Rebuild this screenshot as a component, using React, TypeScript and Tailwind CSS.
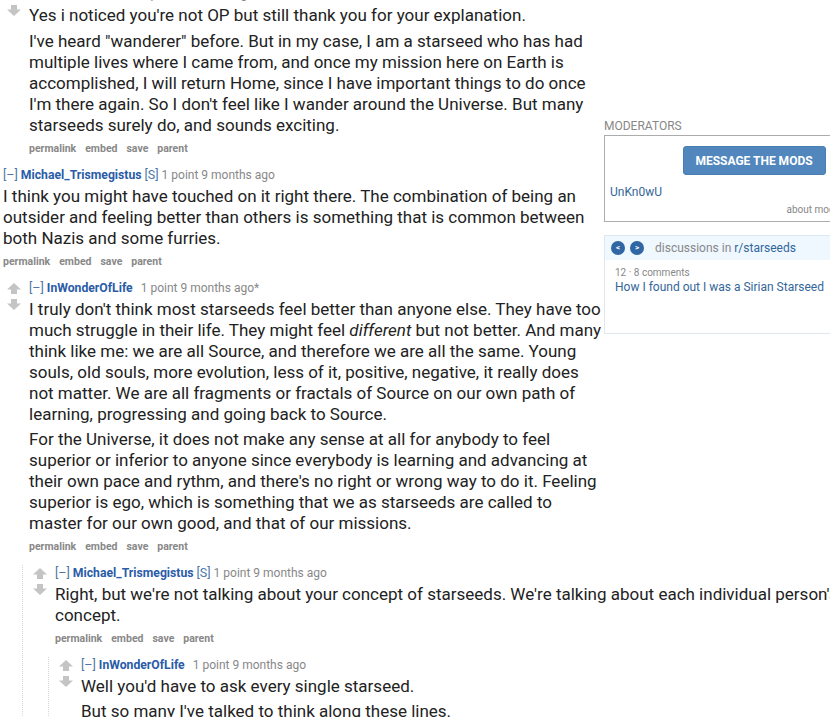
import React from 'react'

function Arrow({ down }: { down?: boolean }) {
  return (
    <svg viewBox="0 0 14 11" className={down ? 'w-[14px] h-[11px] rotate-180' : 'w-[14px] h-[11px]'}>
      <path d="M7 0 L14 6.5 H10 V11 H4 V6.5 H0 Z" fill="#c4c4c4" />
    </svg>
  )
}

interface TaglineProps {
  author: string
  submitter?: boolean
  edited?: boolean
}

function Tagline({ author, submitter, edited }: TaglineProps) {
  return (
    <div className="text-[12px] leading-[16px] text-[#888] whitespace-nowrap">
      <span className="text-[12.5px] text-[#4e76a8]">[–]</span>{' '}
      <span className="text-[12.2px] font-bold text-[#2a5ca8]">{author}</span>
      {submitter ? (
        <>
          {' '}
          <span className="text-[12.5px] text-[#4e76a8]">[S]</span>{' '}
        </>
      ) : (
        <span className="inline-block w-[8px]" />
      )}
      1 point 9 months ago{edited ? '*' : ''}
    </div>
  )
}

function Buttons() {
  return (
    <div className="mt-[5.5px] flex gap-[9px] text-[10.5px] leading-[14px] font-bold text-[#888]">
      <span>permalink</span>
      <span>embed</span>
      <span>save</span>
      <span>parent</span>
    </div>
  )
}

interface CommentProps extends TaglineProps {
  bodyClass: string
  paras: React.ReactNode[]
  children?: React.ReactNode
}

function Comment({ author, submitter, edited, bodyClass, paras, children }: CommentProps) {
  return (
    <div className="flex">
      {/* vote arrows */}
      <div className="w-[14px] shrink-0 pt-[3px] flex flex-col gap-[5px]">
        <Arrow />
        <Arrow down />
      </div>
      <div className="ml-[8px] flex-1 min-w-0">
        <Tagline author={author} submitter={submitter} edited={edited} />
        <div className={bodyClass}>
          {paras.map((p, i) => (
            <p key={i}>{p}</p>
          ))}
        </div>
        <Buttons />
        {children && (
          <div className="mt-[11px] -ml-[7px] border-l border-dotted border-[#d6d6de] pl-[10px]">{children}</div>
        )}
      </div>
    </div>
  )
}

function Sidebar() {
  return (
    <div className="float-right w-[300px] mt-[118px]">
      <div className="text-[12px] leading-[16px] text-[#888] uppercase">Moderators</div>
      <div className="mt-px border border-[#acacac] px-[5px] pt-[10px] pb-[4px]">
        <div className="flex justify-center">
          <button className="h-[29px] w-[143px] rounded-[3px] bg-[#5287bd] border border-[#4a7db2] text-white font-bold text-[12px]">
            MESSAGE THE MODS
          </button>
        </div>
        <div className="mt-[9px] text-[12px] leading-[16px] text-[#336699]">UnKn0wU</div>
        <div className="mt-[3px] text-right text-[10px] leading-[14px] text-[#888]">about moderation team »</div>
      </div>

      <div className="mt-[13px] border border-[#e1e7ee]">
        <div className="h-[24px] bg-[#eff7ff] flex items-center pl-[6px]">
          <span className="w-[14px] h-[14px] rounded-full bg-[#2f66a3] text-white text-[8px] font-bold flex items-center justify-center">&lt;</span>
          <span className="ml-[5px] w-[14px] h-[14px] rounded-full bg-[#2f66a3] text-white text-[8px] font-bold flex items-center justify-center">&gt;</span>
          <span className="ml-[11px] text-[12px] text-[#888]">
            discussions in <span className="text-[#336699]">r/starseeds</span>
          </span>
        </div>
        <div className="h-[73px] px-[10px] pt-[5.5px]">
          <div className="text-[10px] leading-[13px] text-[#888]">12 · 8 comments</div>
          <div className="text-[12px] leading-[16px] text-[#336699]">How I found out I was a Sirian Starseed</div>
        </div>
      </div>
    </div>
  )
}

export default function App() {
  return (
    <div className="w-[830px] h-[717px] overflow-hidden bg-white [font-family:Roboto,'Liberation_Sans',sans-serif]">
      <div className="w-[904px] flow-root">
        <Sidebar />

        <div className="-mt-[14.5px] pl-[7px]">
          <Comment
            author="InWonderOfLife"
            bodyClass="mt-[3.5px] max-w-[575px] text-[17px] leading-[21px] text-[#222] space-y-[5px]"
            paras={[
              "Yes i noticed you're not OP but still thank you for your explanation.",
              "I've heard \"wanderer\" before. But in my case, I am a starseed who has had multiple lives where I came from, and once my mission here on Earth is accomplished, I will return Home, since I have important things to do once I'm there again. So I don't feel like I wander around the Universe. But many starseeds surely do, and sounds exciting.",
            ]}
          />
        </div>

        <div className="mt-[11px] ml-[3px]">
          <Tagline author="Michael_Trismegistus" submitter />
          <div className="mt-[3.5px] w-[590px] text-[17px] leading-[21px] text-[#222]">
            <p>
              I think you might have touched on it right there. The combination of being an outsider and feeling better
              than others is something that is common between both Nazis and some furries.
            </p>
          </div>
          <Buttons />
          <div className="mt-[11px] -ml-[7px] border-l border-dotted border-[#d6d6de] pl-[10px]">
            <Comment
              author="InWonderOfLife"
              edited
              bodyClass="mt-[3.5px] max-w-[575px] text-[17px] leading-[21px] text-[#222] space-y-[4px]"
              paras={[
                <>
                  I truly don't think most starseeds feel better than anyone else. They have too much struggle in their
                  life. They might feel <em>different</em> but not better. And many think like me: we are all Source, and
                  therefore we are all the same. Young souls, old souls, more evolution, less of it, positive, negative,
                  it really does not matter. We are all fragments or fractals of Source on our own path of learning,
                  progressing and going back to Source.
                </>,
                "For the Universe, it does not make any sense at all for anybody to feel superior or inferior to anyone since everybody is learning and advancing at their own pace and rythm, and there's no right or wrong way to do it. Feeling superior is ego, which is something that we as starseeds are called to master for our own good, and that of our missions.",
              ]}
            >
              <Comment
                author="Michael_Trismegistus"
                submitter
                bodyClass="mt-[3.5px] w-[800px] text-[17px] leading-[21px] text-[#222]"
                paras={[
                  "Right, but we're not talking about your concept of starseeds. We're talking about each individual person's concept.",
                ]}
              >
                <Comment
                  author="InWonderOfLife"
                  bodyClass="mt-[3.5px] max-w-[575px] text-[17px] leading-[21px] text-[#222] space-y-[4px]"
                  paras={[
                    "Well you'd have to ask every single starseed.",
                    "But so many I've talked to think along these lines.",
                  ]}
                />
              </Comment>
            </Comment>
          </div>
        </div>
      </div>
    </div>
  )
}
